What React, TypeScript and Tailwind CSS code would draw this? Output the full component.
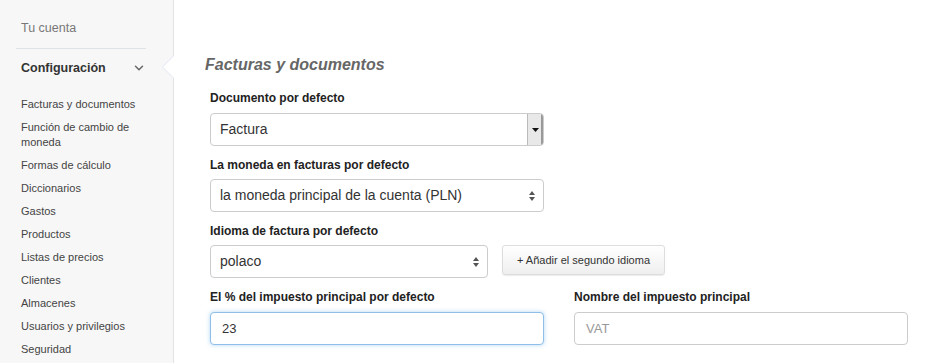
import { ChevronDown } from 'lucide-react';

const menu = [
  'Facturas y documentos',
  'Función de cambio de moneda',
  'Formas de cálculo',
  'Diccionarios',
  'Gastos',
  'Productos',
  'Listas de precios',
  'Clientes',
  'Almacenes',
  'Usuarios y privilegios',
  'Seguridad',
];

function Updown() {
  return (
    <svg width="8" height="12" viewBox="0 0 8 12" className="text-[#555]">
      <path d="M4 1 L7 5 H1 Z" fill="currentColor" />
      <path d="M4 11 L7 7 H1 Z" fill="currentColor" />
    </svg>
  );
}

export default function App() {
  return (
    <div className="flex h-[363px] w-[948px] overflow-hidden bg-white font-['Liberation_Sans',Arial,sans-serif] text-[#333]">
      <aside className="relative w-[174px] shrink-0 border-r border-[#e3e3e3] bg-[#f7f7f7]">
        <div className="px-[21px] pt-[20px] text-[12.5px] leading-[16px] text-[#777]">Tu cuenta</div>
        <div className="ml-[16px] mt-[12px] w-[130px] border-t border-[#dfe3e8]" />
        <div className="flex w-[146px] items-center justify-between pl-[21px] pt-[11px] text-[12.5px] font-bold leading-[16px] text-[#333]">
          <span>Configuración</span>
          <ChevronDown className="h-[14px] w-[14px] text-[#666]" strokeWidth={2.5} />
        </div>
        <ul className="mt-[21px] space-y-[8px] pl-[21px] pr-[20px] text-[11px] leading-[15px] text-[#444]">
          {menu.map((m) => (
            <li key={m}>{m}</li>
          ))}
        </ul>
        <div className="absolute right-[-1px] top-[55px] h-0 w-0 border-y-[12px] border-r-[12px] border-y-transparent border-r-[#dfe6ee]" />
        <div className="absolute right-[-1px] top-[56px] h-0 w-0 border-y-[11px] border-r-[11px] border-y-transparent border-r-white" />
      </aside>

      <main className="flex-1 pl-[31px] pt-[55px]">
        <h2 className="text-[16px] font-bold italic leading-[20px] text-[#666]">Facturas y documentos</h2>

        <div className="mt-[15px] pl-[5px]">
          <label className="block text-[12px] font-bold leading-[16px] text-[#222]">Documento por defecto</label>
          <div className="mt-[7px] flex h-[33px] w-[334px] items-center justify-between overflow-hidden rounded-[4px] border border-[#ccc] bg-white">
            <span className="pl-[9px] text-[14px] text-[#333]">Factura</span>
            <div className="flex h-full w-[16px] items-center justify-center border-l border-[#bbb] bg-[#e8e8e8] shadow-[inset_-2px_0_0_#999]">
              <svg width="7" height="4" viewBox="0 0 7 4">
                <path d="M0 0 H7 L3.5 4 Z" fill="#111" />
              </svg>
            </div>
          </div>

          <label className="mt-[11px] block text-[12px] font-bold leading-[16px] text-[#222]">La moneda en facturas por defecto</label>
          <div className="mt-[6px] flex h-[33px] w-[334px] items-center justify-between rounded-[4px] border border-[#ccc] bg-white pl-[9px] pr-[7px]">
            <span className="text-[14px] text-[#333]">la moneda principal de la cuenta (PLN)</span>
            <Updown />
          </div>

          <label className="mt-[11px] block text-[12px] font-bold leading-[16px] text-[#222]">Idioma de factura por defecto</label>
          <div className="mt-[6px] flex items-start gap-[14px]">
            <div className="flex h-[33px] w-[278px] items-center justify-between rounded-[4px] border border-[#ccc] bg-white pl-[9px] pr-[7px]">
              <span className="text-[14px] text-[#333]">polaco</span>
              <Updown />
            </div>
            <button className="h-[30px] w-[163px] rounded-[3px] border border-[#ddd] bg-gradient-to-b from-white to-[#efefef] text-[11px] text-[#333] shadow-[0_1px_1px_rgba(0,0,0,0.08)]">
              + Añadir el segundo idioma
            </button>
          </div>

          <div className="mt-[11px] flex gap-[30px]">
            <div className="w-[334px]">
              <label className="block text-[12px] font-bold leading-[16px] text-[#222]">El % del impuesto principal por defecto</label>
              <div className="mt-[7px] flex h-[33px] items-center rounded-[4px] border border-[#8fbfe8] bg-white pl-[11px] text-[13px] text-[#333] shadow-[0_0_4px_rgba(102,175,233,0.5)]">
                23
              </div>
            </div>
            <div className="w-[334px]">
              <label className="block text-[12px] font-bold leading-[16px] text-[#222]">Nombre del impuesto principal</label>
              <div className="mt-[7px] flex h-[33px] items-center rounded-[4px] border border-[#ccc] bg-white pl-[11px] text-[13px] text-[#999]">
                VAT
              </div>
            </div>
          </div>
        </div>
      </main>
    </div>
  );
}
